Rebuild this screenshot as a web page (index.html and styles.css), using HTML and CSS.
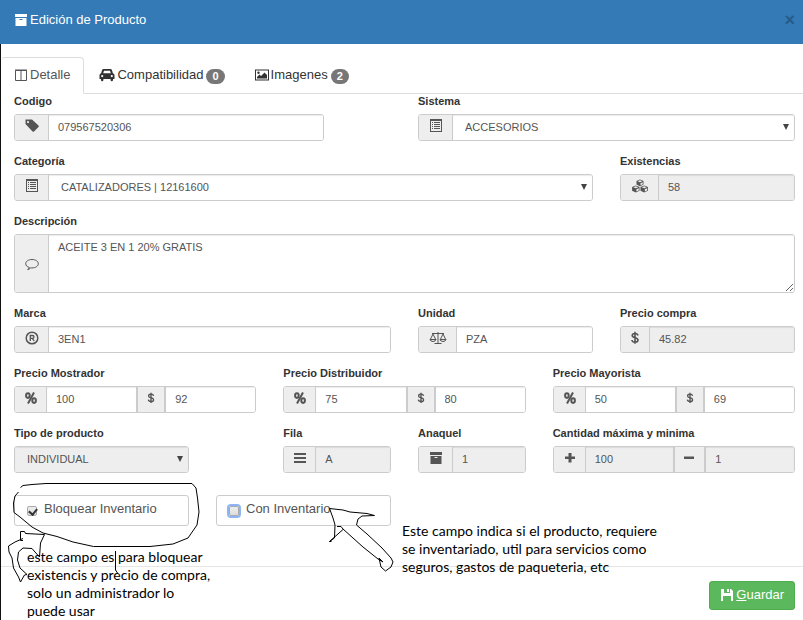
FILE: index.html
```html
<!DOCTYPE html>
<html lang="es">
<head>
<meta charset="utf-8">
<meta name="viewport" content="width=device-width, initial-scale=1">
<title>Edición de Producto</title>
<link rel="stylesheet" href="styles.css">
</head>
<body>
<svg class="defs" aria-hidden="true">
  <symbol id="i-archive" viewBox="0 0 14 14"><path fill-rule="evenodd" d="M1 1h12v3H1zM1.500 5h11v8h-11zM5.500 6v1h3V6z"/></symbol>
  <symbol id="i-tag" viewBox="0 0 14 14"><path fill-rule="evenodd" d="M0.500 0.500v4.500l7 7.500q.8.600 1.500 0l4.500-4.500q.6-.8 0-1.500l-6.500-6zM3 2a1.100 1.100 0 1 1 0 2.200a1.100 1.100 0 1 1 0-2.200z"/></symbol>
  <symbol id="i-list" viewBox="0 0 14 14"><path fill-rule="evenodd" d="M1 0h12v13H1zM2 2v10h10V2z"/><path d="M3 3h1v1H3zM5 3h6v1H5zM3 5h1v1H3zM5 5h6v1H5zM3 7h1v1H3zM5 7h6v1H5zM3 9h1v1H3zM5 9h6v1H5z"/></symbol>
  <symbol id="i-dollar" viewBox="0 0 14 14"><path d="M10 4.500C9.700 3 8.600 2.500 7 2.500S4.200 3.200 4.200 4.600C4.200 7.600 10 5.800 10 9c0 1.400-1.200 2.200-3 2.200S4.100 10.400 3.900 9M7 .8v12" fill="none" stroke="currentColor" stroke-width="1.600"/></symbol>
  <symbol id="i-percent" viewBox="1 0 12 14"><path d="M10 1.500l-6 11" fill="none" stroke="currentColor" stroke-width="2"/><ellipse cx="3.900" cy="4.600" rx="1.800" ry="2.300" fill="none" stroke="currentColor" stroke-width="2"/><ellipse cx="10.100" cy="9.600" rx="1.800" ry="2.300" fill="none" stroke="currentColor" stroke-width="2"/></symbol>
</svg>

<main class="modal">
  <header class="modal-header">
    <h1 class="title"><svg class="icon"><use href="#i-archive"/></svg>Edición de Producto</h1>
    <button class="close" type="button" aria-label="Cerrar">×</button>
  </header>

  <nav class="tabs">
    <a class="tab active" href="#detalle"><svg class="icon" viewBox="0 0 14 14"><path fill="none" stroke="currentColor" d="M1.500 2.500h11v10h-11zM7 2.500v10M1 2h12"/></svg>Detalle</a>
    <a class="tab" href="#compatibilidad"><svg class="icon car" viewBox="0 0 16 14"><path fill-rule="evenodd" d="M4.500 1h7q1 0 1.400 1l1 3.200q1.600.3 1.600 2V11h-1.500v1q0 1.200-1.200 1.200T11.600 12v-1H4.400v1q0 1.200-1.200 1.200T2 12v-1H.5V7.200q0-1.700 1.600-2L3.100 2q.4-1 1.400-1zM5 2.700L4.200 5.200h7.600L11 2.700zM3.200 7a1.100 1.100 0 1 0 0 2.200a1.100 1.100 0 1 0 0-2.200zM12.800 7a1.100 1.100 0 1 0 0 2.200a1.100 1.100 0 1 0 0-2.200z"/></svg>Compatibilidad<span class="badge">0</span></a>
    <a class="tab" href="#imagenes"><svg class="icon" viewBox="0 0 14 14"><path fill-rule="evenodd" d="M0 1.500h14v11H0zM1 2.500v9h12v-9z"/><path d="M2 10.500V9l2.500-2.500L6 8l3.500-3.500L12 7v3.500z"/><circle cx="3.500" cy="4.700" r="1.200"/></svg>Imagenes<span class="badge">2</span></a>
  </nav>

  <form class="form">
    <div class="field s5">
      <label for="codigo">Codigo</label>
      <div class="group"><span class="addon"><svg class="icon"><use href="#i-tag"/></svg></span><input id="codigo" type="text" value="079567520306"></div>
    </div>
    <div class="field s6 c7">
      <label for="sistema">Sistema</label>
      <div class="group"><span class="addon"><svg class="icon"><use href="#i-list"/></svg></span><span class="select"><select id="sistema"><option>ACCESORIOS</option></select></span></div>
    </div>

    <div class="field s9 c1">
      <label for="categoria">Categoría</label>
      <div class="group"><span class="addon"><svg class="icon"><use href="#i-list"/></svg></span><span class="select"><select id="categoria"><option>CATALIZADORES | 12161600</option></select></span></div>
    </div>
    <div class="field s3">
      <label for="existencias">Existencias</label>
      <div class="group"><span class="addon"><svg class="icon wide" viewBox="0 0 17 14"><path d="M8.500 .5l3.500 1.500v3.500L8.500 7.300 5 5.500V2zM4.300 6.500L8 8v3.800l-3.700 1.700L.6 11.800V8zM12.700 6.500L16.400 8v3.800l-3.700 1.700L9 11.800V8z"/><path fill="#eee" d="M8.500 1.300l2.300 1-2.300 1-2.300-1zM9 4.200l2.200-.9v1.900L9 6.300zM4.300 7.300l2.500 1-2.500 1-2.500-1zM4.900 10.200l2.300-.9v2.100l-2.300 1.100zM12.700 7.300l2.500 1-2.500 1-2.500-1zM13.300 10.200l2.300-.9v2.100l-2.300 1.100z"/></svg></span><input id="existencias" type="text" value="58" readonly></div>
    </div>

    <div class="field s12">
      <label for="descripcion">Descripción</label>
      <div class="group"><span class="addon tall"><svg class="icon" viewBox="0 0 14 14"><path fill="none" stroke="currentColor" d="M4.500 10.600C2 9.800.7 8.400.7 6.700.7 4.300 3.400 2.500 7 2.500s6.300 1.800 6.300 4.200S10.600 10.900 7 10.900q-.6 0-1.200-.1Q4.500 12.300 2.600 12.500 4 11.800 4.500 10.600z"/></svg></span><textarea id="descripcion">ACEITE 3 EN 1 20% GRATIS</textarea></div>
    </div>

    <div class="field s6">
      <label for="marca">Marca</label>
      <div class="group"><span class="addon"><svg class="icon" viewBox="0 0 14 14"><circle cx="7" cy="7" r="5.800" fill="none" stroke="currentColor" stroke-width="1.500"/><path fill="none" stroke="currentColor" stroke-width="1.300" d="M5.300 10V4.500h2.200q1.500 0 1.500 1.400T7.500 7.300H5.300M7.300 7.300L9.200 10"/></svg></span><input id="marca" type="text" value="3EN1"></div>
    </div>
    <div class="field s3">
      <label for="unidad">Unidad</label>
      <div class="group"><span class="addon"><svg class="icon wide" viewBox="0 0 17 14"><path fill="none" stroke="currentColor" d="M2.500 2.500h12M8.500 1v11.500M5 12.500h7M3.500 3L.8 8.500M3.500 3l2.700 5.500M13.500 3l-2.700 5.500M13.500 3l2.700 5.500M.5 8.500h6q-.5 2-3 2t-3-2zM10.500 8.500h6q-.5 2-3 2t-3-2z"/></svg></span><input id="unidad" type="text" value="PZA"></div>
    </div>
    <div class="field s3">
      <label for="compra">Precio compra</label>
      <div class="group"><span class="addon money"><svg class="icon"><use href="#i-dollar"/></svg></span><input id="compra" type="text" value="45.82" readonly></div>
    </div>

    <div class="field s4">
      <label for="mostrador">Precio Mostrador</label>
      <div class="group"><span class="addon"><svg class="icon slim"><use href="#i-percent"/></svg></span><input id="mostrador" type="text" value="100"><span class="addon money"><svg class="icon slim"><use href="#i-dollar"/></svg></span><input type="text" value="92" aria-label="Precio Mostrador en pesos"></div>
    </div>
    <div class="field s4">
      <label for="distribuidor">Precio Distribuidor</label>
      <div class="group"><span class="addon"><svg class="icon slim"><use href="#i-percent"/></svg></span><input id="distribuidor" type="text" value="75"><span class="addon money"><svg class="icon slim"><use href="#i-dollar"/></svg></span><input type="text" value="80" aria-label="Precio Distribuidor en pesos"></div>
    </div>
    <div class="field s4">
      <label for="mayorista">Precio Mayorista</label>
      <div class="group"><span class="addon"><svg class="icon slim"><use href="#i-percent"/></svg></span><input id="mayorista" type="text" value="50"><span class="addon money"><svg class="icon slim"><use href="#i-dollar"/></svg></span><input type="text" value="69" aria-label="Precio Mayorista en pesos"></div>
    </div>

    <div class="field s3">
      <label for="tipo">Tipo de producto</label>
      <div class="group"><span class="select"><select id="tipo" disabled><option>INDIVIDUAL</option></select></span></div>
    </div>
    <div class="field s2 c5">
      <label for="fila">Fila</label>
      <div class="group"><span class="addon"><svg class="icon slim" viewBox="1 0 12 14"><path d="M1 2h12v2H1zM1 6h12v2H1zM1 10h12v2H1z"/></svg></span><input id="fila" type="text" value="A" readonly></div>
    </div>
    <div class="field s2">
      <label for="anaquel">Anaquel</label>
      <div class="group"><span class="addon"><svg class="icon"><use href="#i-archive"/></svg></span><input id="anaquel" type="text" value="1" readonly></div>
    </div>
    <div class="field s4">
      <label for="maxima">Cantidad máxima y minima</label>
      <div class="group"><span class="addon"><svg class="icon slim" viewBox="1 0 12 14"><path d="M5.500 2h3v3.500H12v2.500H8.500v3.500h-3V8H2V5.500h3.500z"/></svg></span><input id="maxima" type="text" value="100" readonly><span class="addon"><svg class="icon slim" viewBox="1 0 12 14"><path d="M2 5.500h10V8H2z"/></svg></span><input type="text" value="1" aria-label="Cantidad minima" readonly></div>
    </div>

    <label class="check s3"><input type="checkbox" checked>Bloquear Inventario</label>
    <label class="check focus s3"><input type="checkbox">Con Inventario</label>
  </form>

  <footer class="modal-footer">
    <button class="save" type="button"><svg class="icon" viewBox="0 0 14 14"><path fill-rule="evenodd" d="M1 1h3v4h6V1h1l2 2v10h-2V8H3v5H1zM7 1h2v3H7z"/></svg><span><u>G</u>uardar</span></button>
  </footer>

  <svg class="ink" viewBox="0 0 803 620" width="803" height="620" aria-hidden="true">
    <path d="M20.500 487.500L23 485.500 32 484.500 46 483.500H192L196 488 197.500 498 199 512 197 525 188 538 173 544 150 546.500H93.500L73 542 57 536.500 43 533 32 527 20 517 14 512.500 13.500 503 15 496 18.500 492"/>
    <path d="M23 540.500h-2.500V531.500h4l1 2L44.500 534.500 40.500 543 39.500 557 35 552 32 548.500 23 548 18.500 552 17.500 560 20 568 27 574.500 24.500 575 20.500 582 18.500 577 13.500 568 12 558 9 552 8.500 546 15 542 23 538.500M115.500 551v19l2 3"/>
    <path d="M329.500 508.500L343 510 350 512 367 513.500 374.500 515.500 362 516 358 519 356.500 525 367 534 382 548 391 558 393 562 391 567 385.500 571 381 567 379 558 383 562 378 559 363 547 343 529 341 526.500H337M329.500 508.500L333 518 335 525 334.500 538 329.500 541.500 343 529.500M329.500 541.500h2"/>
  </svg>
  <p class="note note-lock">este campo es para bloquear<br>existencis y precio de compra,<br>solo un administrador lo<br>puede usar</p>
  <p class="note note-stock">Este campo indica si el producto, requiere<br>se inventariado, util para servicios como<br>seguros, gastos de paqueteria, etc</p>
</main>
</body>
</html>
```
FILE: styles.css
```css
* { box-sizing: border-box; }

body {
  margin: 0;
  background: #fff;
  color: #333;
  font: 13px/18px "Liberation Sans", Arial, sans-serif;
}

.defs { position: absolute; width: 0; height: 0; }
.icon { width: 14px; height: 14px; fill: currentColor; flex: none; }
.icon.wide { width: 18px; }
.icon.car { width: 16px; }
.icon.slim { width: 12px; }

.modal { position: relative; border-left: 1px solid #111; min-height: 100vh; }

.modal-header {
  display: flex;
  justify-content: space-between;
  align-items: center;
  height: 44px;
  margin-left: -1px;
  padding: 0 8px 4px 14px;
  background: #337ab7;
  color: #fff;
}
.title { display: flex; align-items: center; gap: 2px; margin: 0; font-size: 13px; font-weight: 400; }
.close { border: 0; padding: 0; background: none; color: #000; opacity: .25; font: bold 18px/18px "Liberation Sans", Arial, sans-serif; }

.tabs { display: flex; margin-top: 13px; height: 37px; border-bottom: 1px solid #ddd; }
.tab {
  display: flex;
  align-items: center;
  gap: 2px;
  height: 37px;
  padding: 0 14px 2px;
  border: 1px solid transparent;
  color: #333;
  text-decoration: none;
}
.tab.active { background: #fff; border-color: #ddd #ddd #fff; border-left-color: transparent; border-radius: 4px 4px 0 0; color: #555; padding-left: 12px; padding-right: 13px; }
.badge {
  margin: 3px 0 0 1px;
  padding: 0 6px;
  border-radius: 9px;
  background: #777;
  color: #fff;
  font-size: 11px;
  line-height: 15px;
  font-weight: 700;
}

.form {
  display: grid;
  grid-template-columns: repeat(12, minmax(0, 1fr));
  column-gap: 27px;
  row-gap: 13px;
  padding: 0 8px 0 13px;
}
.s2 { grid-column-end: span 2; }
.s3 { grid-column-end: span 3; }
.s4 { grid-column-end: span 4; }
.s5 { grid-column-end: span 5; }
.s6 { grid-column-end: span 6; }
.s9 { grid-column-end: span 9; }
.s12 { grid-column-end: span 12; }
.c1 { grid-column-start: 1; }
.c5 { grid-column-start: 5; }
.c7 { grid-column-start: 7; }

.field > label { display: block; margin-bottom: 5px; font-size: 11px; line-height: 15px; font-weight: 700; white-space: nowrap; }
.group { display: flex; border: 1px solid #ccc; border-radius: 3px; overflow: hidden; }
.addon {
  display: flex;
  align-items: center;
  justify-content: center;
  padding: 0 9px 3px 10px;
  background: #eee;
  border-right: 1px solid #ccc;
  color: #555;
}
.addon.tall { padding-bottom: 0; }
.addon.money { padding-left: 7px; padding-right: 7px; }
input + .addon { padding-left: 8px; border-left: 2px solid #ccc; border-right-width: 2px; }

.group input, .group textarea, .group select {
  display: block;
  flex: 1;
  min-width: 0;
  width: 100%;
  height: 25px;
  margin: 0;
  padding: 0 9px 1px;
  border: 0;
  border-radius: 0;
  background: #fff;
  box-shadow: inset 0 1px 1px rgba(0, 0, 0, .08);
  color: #555;
  font: 11px/15px "Liberation Sans", Arial, sans-serif;
  opacity: 1;
}
.group textarea { height: 57px; padding: 5px 9px; resize: vertical; }
.group input:read-only, .group select:disabled { background: #eee; }
.select { position: relative; flex: 1; min-width: 0; }
.group select { appearance: none; padding: 0 12px; }
.select::after {
  content: "";
  position: absolute;
  right: 5px;
  top: 9px;
  border: 3px solid transparent;
  border-top: 6px solid #444;
  border-bottom: 0;
  pointer-events: none;
}

.check {
  display: flex;
  align-items: center;
  gap: 7px;
  height: 31px;
  margin-top: 9px;
  padding: 0 12px 3px;
  border: 1px solid #ccc;
  border-radius: 3px;
  color: #555;
  white-space: nowrap;
}
.check input {
  appearance: none;
  position: relative;
  width: 10px;
  height: 10px;
  margin: 3px 0 0;
  border: 1px solid #aaa;
  border-radius: 2px;
  background: linear-gradient(#eee, #ddd);
}
.check input:checked::after {
  content: "";
  position: absolute;
  left: 2px;
  top: 0;
  width: 4px;
  height: 6px;
  border: solid #333;
  border-width: 0 2px 2px 0;
  transform: rotate(40deg);
}
.check.focus input { box-shadow: 0 0 0 2px #8db4f5; }

.modal-footer {
  display: flex;
  justify-content: flex-end;
  margin-top: 40px;
  padding: 14px 8px 10px;
  border-top: 1px solid #e5e5e5;
}
.save {
  display: flex;
  align-items: center;
  gap: 2px;
  height: 29px;
  padding: 0 10px 2px;
  border: 1px solid #4cae4c;
  border-radius: 3px;
  background: #5cb85c;
  color: #fff;
  font: 13px/18px "Liberation Sans", Arial, sans-serif;
}

.ink { position: absolute; left: -1px; top: 0; fill: none; stroke: #000; stroke-width: 1; pointer-events: none; }
.note { position: absolute; margin: 0; color: #000; font: 14px/18px Lato, sans-serif; white-space: nowrap; }
.note-lock { left: 26px; top: 548px; }
.note-stock { left: 401px; top: 522px; }
```
